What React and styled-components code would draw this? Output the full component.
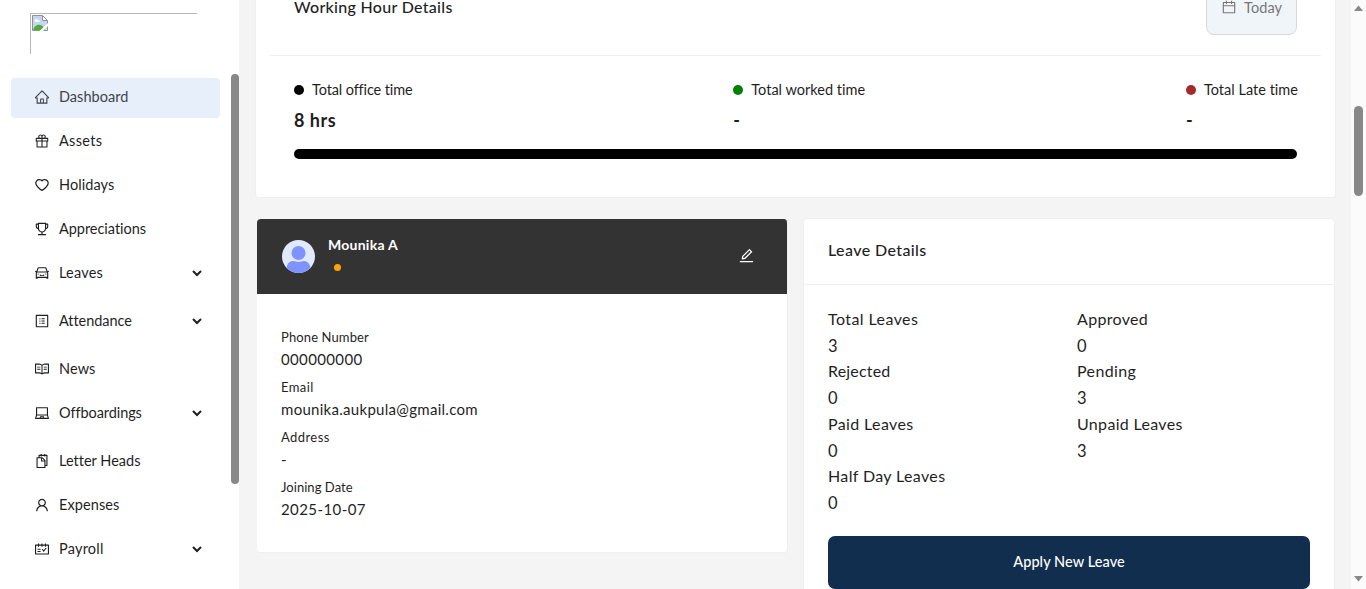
import React from "react";
import styled, { createGlobalStyle } from "styled-components";
import {
  AiOutlineHome, AiOutlineGift, AiOutlineHeart, AiOutlineTrophy, AiOutlineCar, AiOutlineProfile,
  AiOutlineRead, AiOutlineLaptop, AiOutlineSnippets, AiOutlineUser, AiOutlineSchedule,
  AiOutlineEdit, AiOutlineCalendar,
} from "react-icons/ai";

const Global = createGlobalStyle`
  * { box-sizing: border-box; }
  body { margin: 0; overflow: hidden; font-family: Lato, "Open Sans", sans-serif; color: #1f1f1f; background: #f4f4f4; }
`;
const Text = styled.span`letter-spacing: ${p => p.$track || 0}px; white-space: nowrap;`;

const Page = styled.div`display: flex; width: 1366px; height: 589px; overflow: hidden;`;
const Sidebar = styled.aside`display: flex; width: 239px; background: #fff; flex: none;`;
const SideBody = styled.div`width: 231px; padding: 13px 11px 0;`;
const BrokenImage = styled.div`
  width: 167px; height: 41px; margin: 0 0 24px 19px; padding: 1px;
  border-top: 1px solid #b8b8b8; border-left: 1px solid #b8b8b8;
  svg { display: block; }
`;
const Item = styled.div`
  display: flex; align-items: center; height: 40px; padding: 0 17px 0 23px; font-size: 14.5px;
  margin-bottom: ${p => (p.$sub ? 8 : 4)}px; border-radius: 4px;
  background: ${p => (p.$active ? "#e6effa" : "transparent")};
  color: ${p => (p.$active ? "#3f434a" : "#1f1f1f")};
  > svg:first-child { width: 16px; height: 16px; margin: 0 9px 2px 0; flex: none; }
  ${Text} { padding-bottom: 4px; }
`;
const Chevron = styled.svg`margin: 0 0 2px auto; width: 12px; height: 12px;`;
const SideThumb = styled.div`width: 8px; height: 410px; margin-top: 74px; border-radius: 4px; background: #888;`;

const Main = styled.main`flex: 1; padding: 0 15px 0 16px; display: flex; flex-direction: column; gap: 21px;`;
const Card = styled.section`background: #fff; border: 1px solid #efefef; border-radius: 4px;`;
const HoursCard = styled(Card)`height: 198px; border-top: 0; border-radius: 0 0 4px 4px; padding: 0 14px; flex: none;`;
const HoursHead = styled.div`display: flex; justify-content: space-between; height: 56px; padding: 0 24px; border-bottom: 1px solid #efefef;`;
const Title = styled.h2`margin: 0; font-size: 16px; line-height: 24px; font-weight: 500;`;
const HoursTitle = styled(Title)`line-height: 14px;`;
const Today = styled.div`
  display: flex; align-items: center; gap: 7px; width: 91px; height: 55px; margin-top: -20px; padding: 0 0 0 14px;
  background: #eff5f8; border: 1px solid #d9d9d9; border-radius: 8px; color: #777; font-size: 14.5px;
  svg { width: 16px; height: 16px; margin-bottom: 1px; }
`;
const Stats = styled.div`display: flex; justify-content: space-between; padding: 22px 23px 0 24px;`;
const StatLabel = styled.div`display: flex; align-items: center; gap: 8px; font-size: 14.5px; line-height: 24px;`;
const Dot = styled.i`width: 10px; height: 10px; border-radius: 50%; background: ${p => p.$c};`;
const StatValue = styled.div`font-size: 18px; line-height: 28px; font-weight: 700; margin-top: 4px;`;
const Bar = styled.div`height: 10px; margin: 15px 24px 0; border-radius: 5px; background: #000;`;

const Columns = styled.div`display: grid; grid-template-columns: 530px 532px; gap: 16px; padding-left: 2px; align-items: start;`;
const Profile = styled(Card)`height: 334px; border-top: 0; border-left: 0; overflow: hidden; width: 531px;`;
const ProfileHead = styled.header`display: flex; align-items: center; height: 75px; padding: 0 32px 0 25px; background: #333; color: #fff;`;
const Who = styled.div`margin-left: 13px; flex: 1; font-size: 14px; font-weight: 700; line-height: 22px; padding-bottom: 3px;`;
const Status = styled.i`display: block; width: 7px; height: 7px; margin: 8px 0 6px 6px; border-radius: 50%; background: orange;`;
const EditIcon = styled(AiOutlineEdit)`width: 17px; height: 17px; margin-bottom: 2px;`;
const Fields = styled.dl`margin: 0; padding: 32px 24px;`;
const FieldName = styled.dt`font-size: 13px; line-height: 23px; height: 24px;`;
const FieldValue = styled.dd`margin: 0; font-size: 15px; line-height: 19px; height: 26px;`;
const LeaveCard = styled(Card)`height: 400px; margin-top: -1px;`;
const LeaveHead = styled.header`height: 66px; padding: 19px 24px; border-bottom: 1px solid #efefef;`;
const LeaveGrid = styled.div`display: grid; grid-template-columns: 249px 1fr; height: 229px; align-content: start; padding: 20px 24px 0; font-size: 16px;`;
const LeaveName = styled.div`line-height: 27px;`;
const LeaveCount = styled.div`line-height: 28px; height: 25.4px; font-size: 16.5px;`;
const Apply = styled.button`
  display: block; width: 482px; height: 53px; margin: 22px 0 0 24px; padding: 0 0 3px; border: 0; border-radius: 7px;
  background: #122e4e; color: #fff; font: 500 14.5px Lato, sans-serif;
`;
const Scroll = styled.div`display: flex; flex-direction: column; align-items: center; width: 15px; background: #fbfbfb; padding: 5px 0 7px; svg { flex: none; }`;
const Thumb = styled.div`width: 9px; height: 90px; margin: 95px 0 auto; border-radius: 5px; background: #888;`;

const nav = [
  { name: "Dashboard", Icon: AiOutlineHome, track: 0.03 },
  { name: "Assets", Icon: AiOutlineGift, track: 0.3 },
  { name: "Holidays", Icon: AiOutlineHeart, track: 0.08 },
  { name: "Appreciations", Icon: AiOutlineTrophy, track: -0.04 },
  { name: "Leaves", Icon: AiOutlineCar, track: 0.2, sub: true },
  { name: "Attendance", Icon: AiOutlineProfile, track: -0.04, sub: true },
  { name: "News", Icon: AiOutlineRead, track: 0.1 },
  { name: "Offboardings", Icon: AiOutlineLaptop, track: -0.08, sub: true },
  { name: "Letter Heads", Icon: AiOutlineSnippets, track: 0.01 },
  { name: "Expenses", Icon: AiOutlineUser, track: 0.1 },
  { name: "Payroll", Icon: AiOutlineSchedule, track: 0.22, sub: true },
];
const stats = [
  { name: "Total office time", value: "8 hrs", color: "#000", track: -0.12 },
  { name: "Total worked time", value: "-", color: "green", track: 0.02 },
  { name: "Total Late time", value: "-", color: "#a52a2a", track: 0.02 },
];
const fields = [
  { name: "Phone Number", track: 0.12, value: "000000000", valueTrack: 0.36 },
  { name: "Email", track: 0.4, value: "mounika.aukpula@gmail.com", valueTrack: 0.29 },
  { name: "Address", track: 0.42, value: "-" },
  { name: "Joining Date", track: 0.05, value: "2025-10-07", valueTrack: 0.42 },
];
const leaves = [
  { name: "Total Leaves", count: 3, track: 0.42 },
  { name: "Approved", count: 0, track: 0.33 },
  { name: "Rejected", count: 0, track: 0.18 },
  { name: "Pending", count: 3, track: 0.38 },
  { name: "Paid Leaves", count: 0, track: 0.38 },
  { name: "Unpaid Leaves", count: 3, track: 0.32 },
  { name: "Half Day Leaves", count: 0, track: 0.36 },
];

export default function App() {
  return (
    <Page>
      <Global />
      <Sidebar>
        <SideBody>
          <BrokenImage>
            <svg width="16" height="16" viewBox="0 0 16 16">
              <path d="M.5 .5h10l5 5v10H.5z" fill="#c3d6f4" stroke="#929292" />
              <path d="M10.500 .5v5h5z" fill="#fff" stroke="#929292" />
              <path d="M2.500 6c0-2 2.500-3 3.500-1 2 0 2 2 1 2H3.500z" fill="#fff" />
              <path d="M1 15c2-6 8-7 11-2l1 2z" fill="#4caf36" />
              <path d="M7.500 16L16 8v3l-5 5z" fill="#fff" />
            </svg>
          </BrokenImage>
          {nav.map(({ name, Icon, track, sub }, i) => (
            <Item key={name} $active={i === 0} $sub={sub}>
              <Icon />
              <Text $track={track}>{name}</Text>
              {sub && (
                <Chevron viewBox="0 0 12 12">
                  <path d="M2 4l4 4 4-4" fill="none" stroke="#1f1f1f" strokeWidth="2" />
                </Chevron>
              )}
            </Item>
          ))}
        </SideBody>
        <SideThumb />
      </Sidebar>
      <Main>
        <HoursCard>
          <HoursHead>
            <HoursTitle><Text $track={0.3}>Working Hour Details</Text></HoursTitle>
            <Today><AiOutlineCalendar /><Text $track={0.1}>Today</Text></Today>
          </HoursHead>
          <Stats>
            {stats.map(({ name, value, color, track }) => (
              <div key={name}>
                <StatLabel><Dot $c={color} /><Text $track={track}>{name}</Text></StatLabel>
                <StatValue><Text $track={0.5}>{value}</Text></StatValue>
              </div>
            ))}
          </Stats>
          <Bar />
        </HoursCard>
        <Columns>
          <Profile>
            <ProfileHead>
              <svg width="33" height="33" viewBox="0 0 33 33">
                <defs><clipPath id="round"><circle cx="16.500" cy="16.500" r="16.500" /></clipPath></defs>
                <g clipPath="url(#round)">
                  <rect width="33" height="33" fill="#e0e9fd" />
                  <circle cx="16.500" cy="13" r="7" fill="#7f93ff" />
                  <path d="M4 33c0-7 2-12 7-12 3 0 3 1 5.500 1s2.500-1 5.500-1c5 0 7 5 7 12z" fill="#7f93ff" />
                </g>
              </svg>
              <Who><Text $track={0.25}>Mounika A</Text><Status /></Who>
              <EditIcon />
            </ProfileHead>
            <Fields>
              {fields.map(({ name, track, value, valueTrack }) => (
                <React.Fragment key={name}>
                  <FieldName><Text $track={track}>{name}</Text></FieldName>
                  <FieldValue><Text $track={valueTrack}>{value}</Text></FieldValue>
                </React.Fragment>
              ))}
            </Fields>
          </Profile>
          <LeaveCard>
            <LeaveHead><Title><Text $track={0.4}>Leave Details</Text></Title></LeaveHead>
            <LeaveGrid>
              {leaves.map(({ name, count, track }) => (
                <div key={name}>
                  <LeaveName><Text $track={track}>{name}</Text></LeaveName>
                  <LeaveCount>{count}</LeaveCount>
                </div>
              ))}
            </LeaveGrid>
            <Apply><Text $track={0.07}>Apply New Leave</Text></Apply>
          </LeaveCard>
        </Columns>
      </Main>
      <Scroll>
        <svg width="9" height="6" viewBox="0 0 9 6"><path d="M4.500 .5L9 6H0z" fill="#888" /></svg>
        <Thumb />
        <svg width="9" height="6" viewBox="0 0 9 6"><path d="M4.500 5.500L9 0H0z" fill="#888" /></svg>
      </Scroll>
    </Page>
  );
}
